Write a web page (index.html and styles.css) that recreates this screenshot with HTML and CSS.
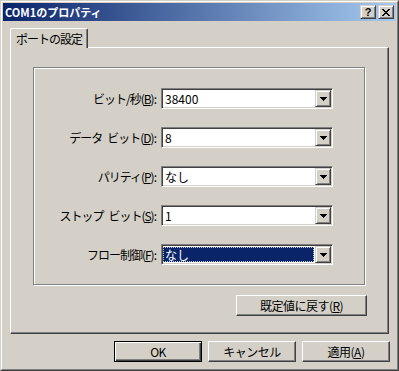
FILE: index.html
```html
<!DOCTYPE html>
<html lang="ja">
<head>
<meta charset="utf-8">
<title>COM1のプロパティ</title>
<link rel="stylesheet" href="styles.css">
</head>
<body>
<div class="window">
  <div class="frame">
    <div class="titlebar">
      <span class="title">COM1のプロパティ</span>
      <div class="caption-buttons">
        <div class="cap-btn"><span class="qmark">?</span></div>
        <div class="cap-btn">
          <svg class="close-x" width="8" height="7" viewBox="0 0 8 7" shape-rendering="crispEdges">
            <path d="M0 0h2v1H0zM6 0h2v1H6zM1 1h2v1H1zM5 1h2v1H5zM2 2h4v1H2zM3 3h2v1H3zM2 4h4v1H2zM1 5h2v1H1zM5 5h2v1H5zM0 6h2v1H0zM6 6h2v1H6z" fill="#000"/>
          </svg>
        </div>
      </div>
    </div>
    <div class="client">
      <div class="tabstrip">
        <div class="tab">ポートの設定</div>
      </div>
      <div class="panel">
        <div class="group">
          <div class="label">ビット/秒(<u>B</u>):</div>
          <div class="combo"><div class="combo-text">38400</div><div class="combo-btn"><svg width="7" height="4" viewBox="0 0 7 4" shape-rendering="crispEdges"><path d="M0 0h7v1H0zM1 1h5v1H1zM2 2h3v1H2zM3 3h1v1H3z" fill="#000"/></svg></div></div>

          <div class="label">データ&ensp;ビット(<u>D</u>):</div>
          <div class="combo"><div class="combo-text">8</div><div class="combo-btn"><svg width="7" height="4" viewBox="0 0 7 4" shape-rendering="crispEdges"><path d="M0 0h7v1H0zM1 1h5v1H1zM2 2h3v1H2zM3 3h1v1H3z" fill="#000"/></svg></div></div>

          <div class="label">パリティ(<u>P</u>):</div>
          <div class="combo"><div class="combo-text">なし</div><div class="combo-btn"><svg width="7" height="4" viewBox="0 0 7 4" shape-rendering="crispEdges"><path d="M0 0h7v1H0zM1 1h5v1H1zM2 2h3v1H2zM3 3h1v1H3z" fill="#000"/></svg></div></div>

          <div class="label">ストップ&ensp;ビット(<u>S</u>):</div>
          <div class="combo"><div class="combo-text">1</div><div class="combo-btn"><svg width="7" height="4" viewBox="0 0 7 4" shape-rendering="crispEdges"><path d="M0 0h7v1H0zM1 1h5v1H1zM2 2h3v1H2zM3 3h1v1H3z" fill="#000"/></svg></div></div>

          <div class="label">フロー制御(<u>F</u>):</div>
          <div class="combo"><div class="combo-text focused"><span class="sel">なし</span></div><div class="combo-btn"><svg width="7" height="4" viewBox="0 0 7 4" shape-rendering="crispEdges"><path d="M0 0h7v1H0zM1 1h5v1H1zM2 2h3v1H2zM3 3h1v1H3z" fill="#000"/></svg></div></div>
        </div>
        <button class="btn reset">既定値に戻す(<u>R</u>)</button>
      </div>
      <div class="buttons">
        <button class="btn default">OK</button>
        <button class="btn">キャンセル</button>
        <button class="btn">適用(<u>A</u>)</button>
      </div>
    </div>
  </div>
</div>
</body>
</html>
```

FILE: styles.css
```css
* { box-sizing: border-box; }
html, body { margin: 0; padding: 0; }
body {
  width: 399px;
  height: 371px;
  overflow: hidden;
  background: #D4D0C8;
  font-family: "Noto Sans CJK JP", "Noto Sans", sans-serif;
  font-size: 12px;
  color: #000;
}
u { text-decoration: underline; text-underline-offset: 1px; }

.window {
  width: 399px;
  height: 371px;
  border: 1px solid;
  border-color: #D4D0C8 #404040 #404040 #D4D0C8;
}
.frame {
  height: 100%;
  border: 1px solid;
  border-color: #fff #808080 #808080 #fff;
  padding: 1px;
  display: flex;
  flex-direction: column;
  background: #D4D0C8;
}

.titlebar {
  flex: none;
  height: 18px;
  background: linear-gradient(to right, #0A246A, #A6CAF0);
  display: flex;
  align-items: center;
  padding: 0 2px;
}
.title {
  flex: 1;
  color: #fff;
  font-weight: bold;
  font-size: 11px;
  line-height: 18px;
  white-space: nowrap;
}
.caption-buttons { display: flex; gap: 2px; }
.cap-btn {
  width: 16px;
  height: 14px;
  background: #D4D0C8;
  border: 1px solid;
  border-color: #D4D0C8 #404040 #404040 #D4D0C8;
  box-shadow: inset 1px 1px #fff, inset -1px -1px #808080;
  display: flex;
  align-items: center;
  justify-content: center;
}
.qmark {
  font-family: "Liberation Sans", sans-serif;
  font-weight: bold;
  font-size: 11px;
  line-height: 11px;
}
.close-x { display: block; }

.client {
  flex: 1;
  display: flex;
  flex-direction: column;
  padding: 7px 0 6px 7px;
}
.tabstrip { display: flex; height: 19px; }
.tab {
  position: relative;
  z-index: 1;
  width: 78px;
  height: 20px;
  background: #D4D0C8;
  border-top: 1px solid #fff;
  border-left: 1px solid #fff;
  border-right: 1px solid #404040;
  box-shadow: inset -1px 0 #808080;
  border-radius: 2px 2px 0 0;
  padding-left: 5px;
  line-height: 19px;
  letter-spacing: -1px;
  white-space: nowrap;
}
.panel {
  width: 379px;
  height: 287px;
  border: 1px solid;
  border-color: #fff #404040 #404040 #fff;
  box-shadow: inset -1px -1px #808080;
  padding: 19px 0 0 22px;
  display: flex;
  flex-direction: column;
}

.group {
  width: 332px;
  height: 218px;
  border: 1px solid #808080;
  box-shadow: 1px 1px 0 #fff, inset 1px 1px 0 #fff;
  padding-top: 20px;
  display: grid;
  grid-template-columns: 123px 172px;
  grid-auto-rows: 21px;
  column-gap: 4px;
  row-gap: 18px;
  align-content: start;
}
.label {
  align-self: center;
  text-align: right;
  white-space: nowrap;
  line-height: 14px;
  letter-spacing: -1px;
  padding-right: 1px;
}
.combo {
  display: flex;
  height: 21px;
  background: #fff;
  border: 1px solid;
  border-color: #808080 #fff #fff #808080;
  box-shadow: inset 1px 1px #404040, inset -1px -1px #D4D0C8;
  padding: 1px;
}
.combo-text {
  flex: 1;
  padding-left: 2px;
  line-height: 17px;
  white-space: nowrap;
}
.combo-text.focused { padding: 1px 1px 1px 0; }
.sel {
  display: block;
  height: 100%;
  background: #0A246A;
  color: #fff;
  outline: 1px dotted #C8C8C8;
  outline-offset: -1px;
  padding-left: 2px;
  line-height: 15px;
}
.combo-btn {
  width: 16px;
  height: 17px;
  background: #D4D0C8;
  border: 1px solid;
  border-color: #D4D0C8 #404040 #404040 #D4D0C8;
  box-shadow: inset 1px 1px #fff, inset -1px -1px #808080;
  display: flex;
  align-items: center;
  justify-content: center;
}
.combo-btn svg { display: block; }

.btn {
  height: 21px;
  margin: 0;
  padding: 0;
  font-family: inherit;
  font-size: 12px;
  color: #000;
  background: #D4D0C8;
  border: 1px solid;
  border-color: #fff #404040 #404040 #fff;
  box-shadow: inset -1px -1px #808080;
  white-space: nowrap;
  line-height: 17px;
  letter-spacing: -0.5px;
}
.btn.default {
  border-color: #000;
  box-shadow: inset 1px 1px #fff, inset -1px -1px #404040, inset -2px -2px #808080;
}
.reset {
  width: 131px;
  margin-top: 10px;
  align-self: flex-end;
  margin-right: 21px;
}
.buttons {
  display: flex;
  justify-content: flex-end;
  gap: 6px;
  margin-top: 7px;
  padding-right: 6px;
}
.buttons .btn { width: 88px; }
```
